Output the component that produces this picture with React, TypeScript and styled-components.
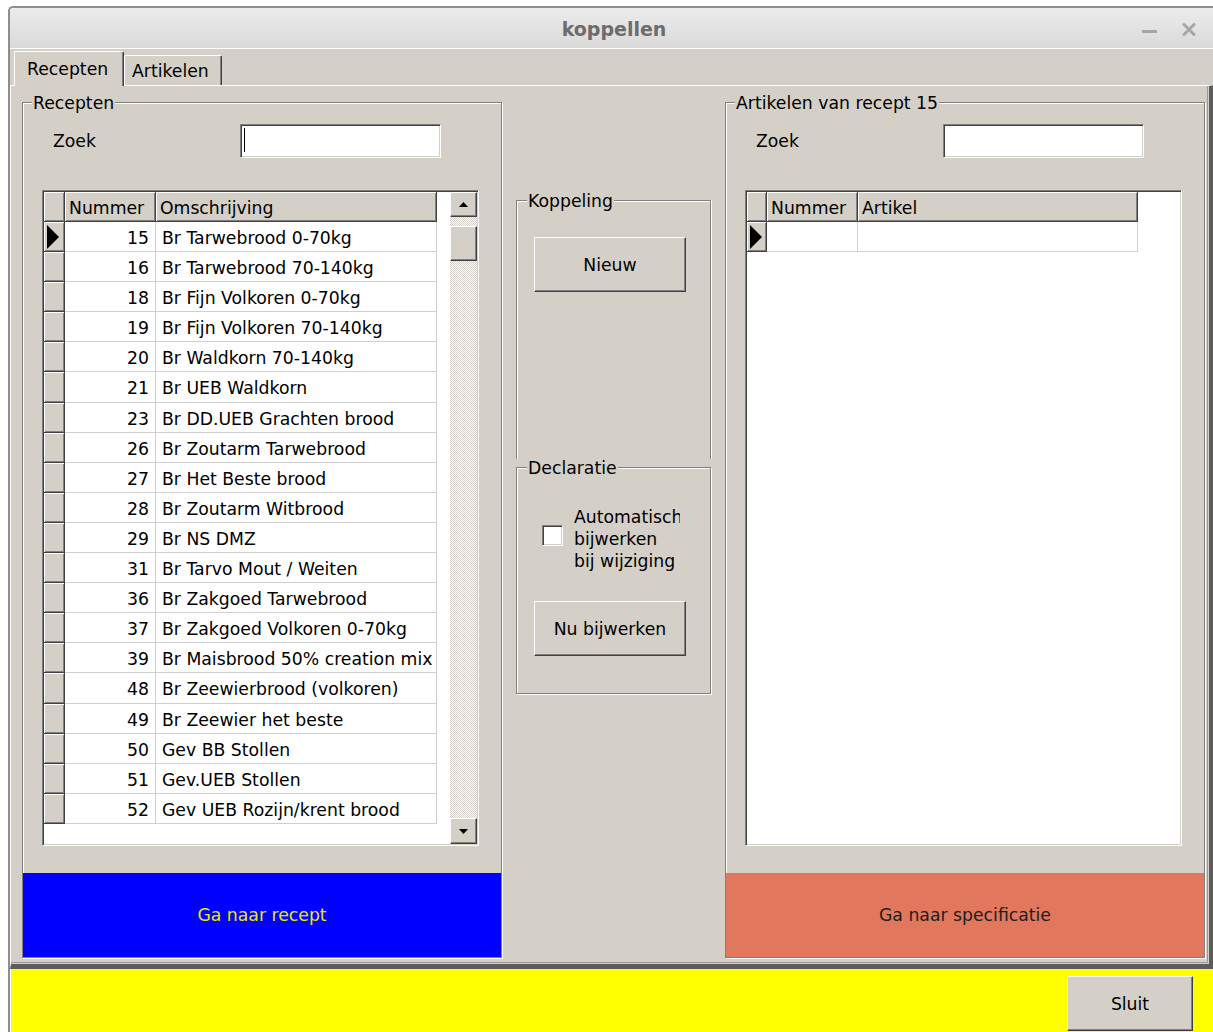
import React from 'react';
import styled, { createGlobalStyle, css } from 'styled-components';

const FACE = '#d4d0c8';
const SHADOW = '#808080';
const DARK = '#404040';

interface Recipe {
  nr: string;
  name: string;
}

const recipes: Recipe[] = [
  { nr: '15', name: 'Br Tarwebrood 0-70kg' },
  { nr: '16', name: 'Br Tarwebrood 70-140kg' },
  { nr: '18', name: 'Br Fijn Volkoren 0-70kg' },
  { nr: '19', name: 'Br Fijn Volkoren 70-140kg' },
  { nr: '20', name: 'Br Waldkorn 70-140kg' },
  { nr: '21', name: 'Br UEB Waldkorn' },
  { nr: '23', name: 'Br DD.UEB Grachten brood' },
  { nr: '26', name: 'Br Zoutarm Tarwebrood' },
  { nr: '27', name: 'Br Het Beste brood' },
  { nr: '28', name: 'Br Zoutarm Witbrood' },
  { nr: '29', name: 'Br NS DMZ' },
  { nr: '31', name: 'Br Tarvo Mout / Weiten' },
  { nr: '36', name: 'Br Zakgoed Tarwebrood' },
  { nr: '37', name: 'Br Zakgoed Volkoren 0-70kg' },
  { nr: '39', name: 'Br Maisbrood 50% creation mix' },
  { nr: '48', name: 'Br Zeewierbrood (volkoren)' },
  { nr: '49', name: 'Br Zeewier het beste' },
  { nr: '50', name: 'Gev BB Stollen' },
  { nr: '51', name: 'Gev.UEB Stollen' },
  { nr: '52', name: 'Gev UEB Rozijn/krent brood' },
];

const GlobalStyle = createGlobalStyle`
  html, body {
    margin: 0;
    padding: 0;
    background: #fff;
    overflow: hidden;
  }
  body {
    font-family: 'DejaVu Sans', Verdana, sans-serif;
    font-size: 17.25px;
    color: #000;
  }
  * {
    box-sizing: border-box;
  }
`;

// classic 3D bevels
const raised = css`
  background: ${FACE};
  border: 1px solid;
  border-color: #fff ${DARK} ${DARK} #fff;
  box-shadow: inset -1px -1px 0 ${SHADOW};
`;

const sunken = css`
  background: #fff;
  border: 1px solid;
  border-color: ${SHADOW} #fff #fff ${SHADOW};
  box-shadow: inset 1px 1px 0 ${DARK}, inset -1px -1px 0 ${FACE};
`;

const Window = styled.div`
  width: 1210px;
  height: 1026px;
  margin: 6px 0 0 8px;
  border-top: 2px solid #8e8e8e;
  border-left: 2px solid #8e8e8e;
  border-top-left-radius: 5px;
  overflow: hidden;
  background: ${FACE};
  display: flex;
  flex-direction: column;
`;

const TitleBar = styled.div`
  flex: none;
  height: 41px;
  padding-top: 2px;
  display: grid;
  grid-template-columns: 1fr auto 1fr;
  align-items: center;
  background: linear-gradient(#ececec, #d9d9d9);
  border-bottom: 1px solid #fff;
`;

const Title = styled.span`
  grid-column: 2;
  font-size: 19px;
  font-weight: bold;
  color: #6c6c6c;
`;

const WindowControls = styled.div`
  justify-self: end;
  display: flex;
  align-items: center;
  gap: 25px;
  padding-right: 22px;
  color: #a6a6a6;
`;

const MinimizeIcon = styled.svg`
  margin-top: 4px;
`;

const TabStrip = styled.div`
  flex: none;
  height: 36px;
  padding-left: 4px;
  display: flex;
  align-items: flex-end;
`;

const Tab = styled.div<{ $active?: boolean }>`
  position: relative;
  z-index: ${(p) => (p.$active ? 1 : 0)};
  width: ${(p) => (p.$active ? 110 : 98)}px;
  height: ${(p) => (p.$active ? 35 : 30)}px;
  margin-bottom: ${(p) => (p.$active ? -1 : 0)}px;
  padding-left: ${(p) => (p.$active ? 12 : 7)}px;
  display: flex;
  align-items: center;
  background: ${FACE};
  border-top: 1px solid #fff;
  border-left: 1px solid #fff;
  border-right: 1px solid ${DARK};
  box-shadow: inset -1px 0 0 ${SHADOW};
  border-top-left-radius: 2px;
  border-top-right-radius: 2px;
`;

const TabPage = styled.div`
  flex: none;
  width: 1204px;
  height: 884px;
  padding: 16px 0 0 11px;
  border-top: 1px solid #fff;
  border-left: 1px solid #fff;
  border-right: 5px solid #5c5c5c;
  border-bottom: 5px solid #5c5c5c;
  box-shadow: inset -1px -1px 0 ${FACE}, inset -2px -2px 0 #9a9a9a;
  display: grid;
  grid-template-columns: 480px 195px 480px;
  column-gap: 14px;
  align-items: start;
`;

const Group = styled.div<{ $height: number; $open?: boolean }>`
  height: ${(p) => p.$height}px;
  display: flex;
  flex-direction: column;
  border: 1px solid ${SHADOW};
  border-bottom: ${(p) => (p.$open ? 'none' : `1px solid ${SHADOW}`)};
  box-shadow: inset 1px 1px 0 #fff,
    ${(p) => (p.$open ? '1px 0 0 #fff' : '1px 1px 0 #fff')};
`;

const Caption = styled.span<{ $inset?: number }>`
  align-self: flex-start;
  margin: -10px 0 0 ${(p) => p.$inset ?? 9}px;
  padding: 0 1px;
  line-height: 20px;
  background: ${FACE};
`;

const SearchRow = styled.div`
  display: flex;
  align-items: center;
  margin-top: 11px;
  padding-left: 30px;
`;

const SearchLabel = styled.span`
  width: 187px;
`;

const SearchBox = styled.div`
  ${sunken};
  width: 201px;
  height: 34px;
  padding: 3px 0 0 3px;
`;

const Caret = styled.span`
  display: block;
  width: 1px;
  height: 24px;
  background: #000;
`;

const GridFrame = styled.div`
  ${sunken};
  width: 437px;
  height: 656px;
  margin: 32px 0 0 19px;
  padding: 1px;
  display: flex;
  justify-content: space-between;
`;

const Table = styled.div<{ $cols: string }>`
  display: grid;
  grid-template-columns: ${(p) => p.$cols};
  grid-template-rows: 30px;
  grid-auto-rows: 30.1px;
  align-content: start;
`;

const HeadCell = styled.div`
  ${raised};
  border-top: none;
  border-left: none;
  box-shadow: inset 1px 1px 0 #fff, inset -1px -1px 0 ${SHADOW};
  padding-left: 4px;
  line-height: 32px;
  white-space: nowrap;
  overflow: hidden;
`;

const RowHeader = styled(HeadCell)`
  padding-left: 3px;
  display: flex;
  align-items: center;
`;

const Cell = styled.div<{ $num?: boolean }>`
  padding: ${(p) => (p.$num ? '0 6px 0 0' : '0 0 0 6px')};
  text-align: ${(p) => (p.$num ? 'right' : 'left')};
  line-height: 32px;
  white-space: nowrap;
  overflow: hidden;
  border-right: 1px solid #cfcfcf;
  border-bottom: 1px solid #cfcfcf;
`;

const ScrollBar = styled.div`
  width: 27px;
  display: flex;
  flex-direction: column;
  background: repeating-conic-gradient(#fff 0 25%, ${FACE} 0 50%) 0 0 / 2px 2px;
`;

const ScrollButton = styled.div<{ $h: number }>`
  ${raised};
  flex: none;
  height: ${(p) => p.$h}px;
  display: flex;
  align-items: center;
  justify-content: center;
`;

const Thumb = styled.div`
  ${raised};
  height: 35px;
  margin-top: 9px;
`;

const Track = styled.div`
  flex: 1;
`;

const ActionButton = styled.div<{ $bg: string; $fg: string }>`
  margin-top: auto;
  height: 84px;
  display: flex;
  align-items: center;
  justify-content: center;
  background: ${(p) => p.$bg};
  color: ${(p) => p.$fg};
`;

const MiddleColumn = styled.div`
  display: flex;
  flex-direction: column;
  padding-top: 98px;
`;

const PushButton = styled.div<{ $w: number; $mt?: number }>`
  ${raised};
  flex: none;
  width: ${(p) => p.$w}px;
  height: 55px;
  margin-top: ${(p) => p.$mt ?? 0}px;
  display: flex;
  align-items: center;
  justify-content: center;
`;

const GroupButton = styled(PushButton)`
  margin-left: 17px;
`;

const Declaratie = styled(Group)`
  margin-top: 8px;
`;

const OptionRow = styled.div`
  display: flex;
  align-items: flex-start;
  margin-top: 28px;
  padding-left: 25px;
`;

const CheckBox = styled.div`
  ${sunken};
  width: 21px;
  height: 21px;
  margin-top: 19px;
`;

const OptionText = styled.div`
  width: 106px;
  margin-left: 11px;
  line-height: 22px;
  white-space: nowrap;
  overflow: hidden;
`;

const Footer = styled.div`
  flex: 1;
  display: flex;
  justify-content: flex-end;
  align-items: flex-start;
  padding: 7px 25px 0 0;
  background: #ffff00;
  border-left: 1px solid #fff;
`;

const Pointer = () => (
  <svg width="12" height="24" viewBox="0 0 12 24">
    <polygon points="0,0 12,12 0,24" fill="#000" />
  </svg>
);

const Arrow = ({ down }: { down?: boolean }) => (
  <svg width="9" height="5" viewBox="0 0 9 5">
    <polygon points={down ? '0,0 9,0 4.5,5' : '4.5,0 9,5 0,5'} fill="#000" />
  </svg>
);

interface DataGridProps {
  cols: number[];
  headers: string[];
  rows: Recipe[];
  scroll?: boolean;
}

const DataGrid: React.FC<DataGridProps> = ({ cols, headers, rows, scroll }) => (
  <GridFrame>
    <Table $cols={cols.map((c) => `${c}px`).join(' ')}>
      <HeadCell />
      {headers.map((h) => (
        <HeadCell key={h}>{h}</HeadCell>
      ))}
      {rows.map((row, i) => (
        <React.Fragment key={i}>
          <RowHeader>{i === 0 && <Pointer />}</RowHeader>
          <Cell $num>{row.nr}</Cell>
          <Cell>{row.name}</Cell>
        </React.Fragment>
      ))}
    </Table>
    {scroll && (
      <ScrollBar>
        <ScrollButton $h={25}>
          <Arrow />
        </ScrollButton>
        <Thumb />
        <Track />
        <ScrollButton $h={26}>
          <Arrow down />
        </ScrollButton>
      </ScrollBar>
    )}
  </GridFrame>
);

const App: React.FC = () => {
  return (
    <>
      <GlobalStyle />
      <Window>
        <TitleBar>
          <Title>koppellen</Title>
          <WindowControls>
            <MinimizeIcon width="15" height="3" viewBox="0 0 15 3">
              <rect width="15" height="3" fill="currentColor" />
            </MinimizeIcon>
            <svg width="14" height="13" viewBox="0 0 14 13">
              <path
                d="M2 1.5 12 11.5M12 1.5 2 11.5"
                stroke="currentColor"
                strokeWidth="3"
                strokeLinecap="round"
              />
            </svg>
          </WindowControls>
        </TitleBar>

        <TabStrip>
          <Tab $active>Recepten</Tab>
          <Tab>Artikelen</Tab>
        </TabStrip>

        <TabPage>
          <Group $height={856}>
            <Caption>Recepten</Caption>
            <SearchRow>
              <SearchLabel>Zoek</SearchLabel>
              <SearchBox>
                <Caret />
              </SearchBox>
            </SearchRow>
            <DataGrid
              cols={[21, 91, 281]}
              headers={['Nummer', 'Omschrijving']}
              rows={recipes}
              scroll
            />
            <ActionButton $bg="#0000ff" $fg="#e8e800">
              Ga naar recept
            </ActionButton>
          </Group>

          <MiddleColumn>
            <Group $height={259} $open>
              <Caption $inset={10}>Koppeling</Caption>
              <GroupButton $w={152} $mt={26}>
                Nieuw
              </GroupButton>
            </Group>
            <Declaratie $height={227}>
              <Caption $inset={10}>Declaratie</Caption>
              <OptionRow>
                <CheckBox />
                <OptionText>
                  Automatisch
                  <br />
                  bijwerken
                  <br />
                  bij wijziging
                </OptionText>
              </OptionRow>
              <GroupButton $w={152} $mt={29}>
                Nu bijwerken
              </GroupButton>
            </Declaratie>
          </MiddleColumn>

          <Group $height={856}>
            <Caption>Artikelen van recept 15</Caption>
            <SearchRow>
              <SearchLabel>Zoek</SearchLabel>
              <SearchBox />
            </SearchRow>
            <DataGrid
              cols={[20, 91, 280]}
              headers={['Nummer', 'Artikel']}
              rows={[{ nr: '', name: '' }]}
            />
            <ActionButton $bg="#e1775d" $fg="#1e1e1e">
              Ga naar specificatie
            </ActionButton>
          </Group>
        </TabPage>

        <Footer>
          <PushButton $w={126}>Sluit</PushButton>
        </Footer>
      </Window>
    </>
  );
};

export default App;
